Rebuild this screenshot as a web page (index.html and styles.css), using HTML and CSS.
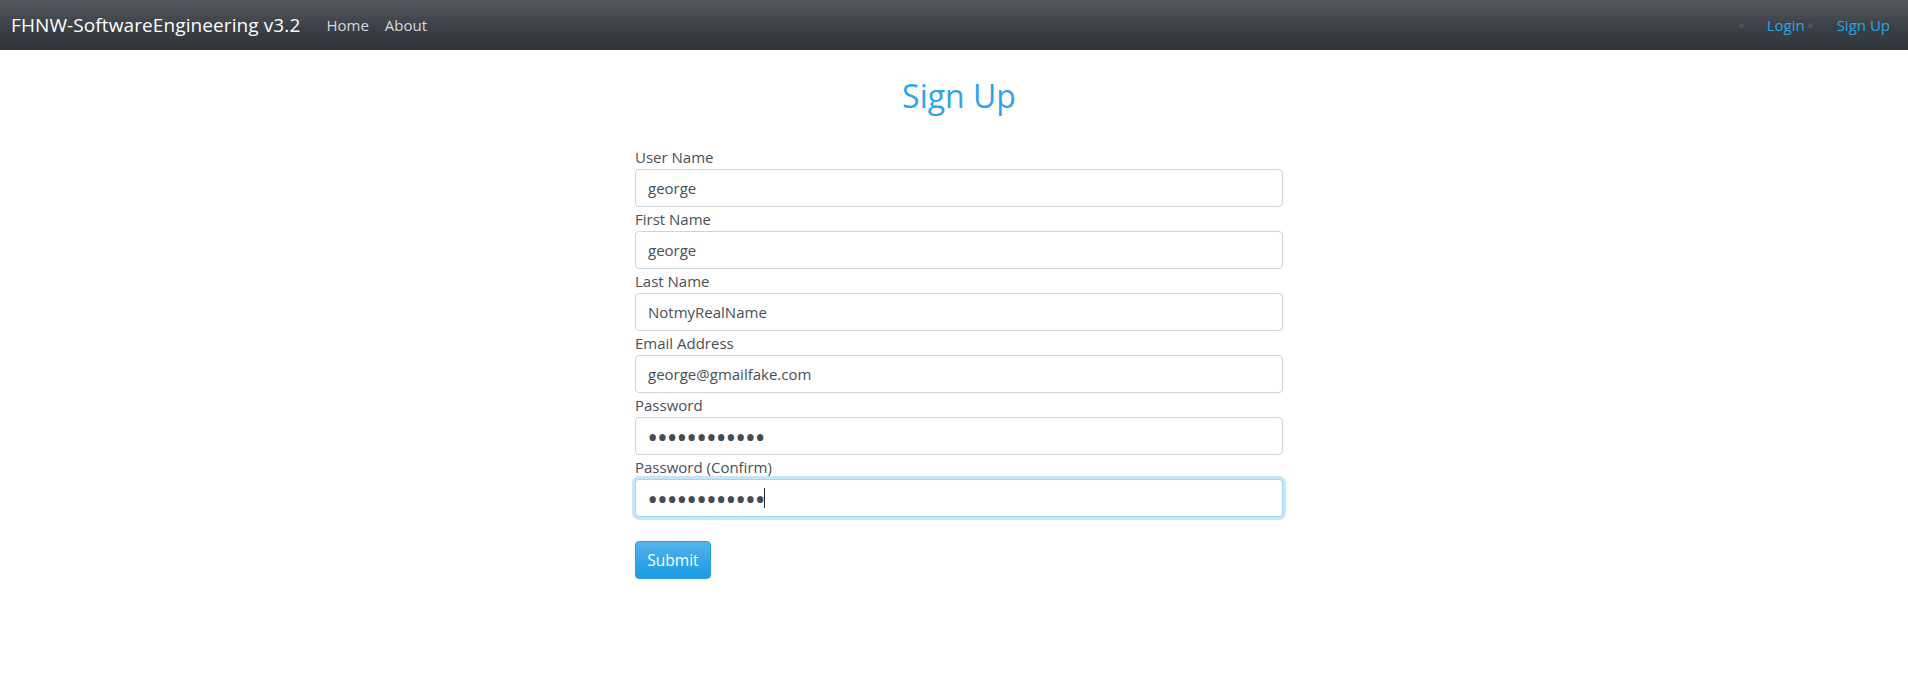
FILE: index.html
```html
<!DOCTYPE html>
<html lang="en">
<head>
<meta charset="utf-8">
<title>Sign Up</title>
<link rel="stylesheet" href="styles.css">
</head>
<body>
<nav class="navbar">
  <div class="nav-left">
    <a class="brand" href="#">FHNW-SoftwareEngineering v3.2</a>
    <a class="nav-link" href="#">Home</a>
    <a class="nav-link" href="#">About</a>
  </div>
  <div class="nav-right">
    <span class="dot"></span>
    <a class="nav-link accent login" href="#">Login</a>
    <span class="dot dot2"></span>
    <a class="nav-link accent signup" href="#">Sign Up</a>
  </div>
</nav>
<main class="page">
  <div class="column">
    <h1 class="title">Sign Up</h1>
    <form class="form">
      <label class="label" for="u">User Name</label>
      <input class="field" id="u" type="text" value="george">
      <label class="label" for="f">First Name</label>
      <input class="field" id="f" type="text" value="george">
      <label class="label" for="l">Last Name</label>
      <input class="field" id="l" type="text" value="NotmyRealName">
      <label class="label" for="e">Email Address</label>
      <input class="field" id="e" type="text" value="george@gmailfake.com">
      <label class="label" for="p">Password</label>
      <input class="field pw" id="p" type="password" value="abcdefghijkl">
      <label class="label" for="pc">Password (Confirm)</label>
      <div class="focus-wrap">
        <input class="field pw focused" id="pc" type="password" value="abcdefghijkl">
        <span class="caret"></span>
      </div>
      <div class="actions">
        <button class="btn" type="button">Submit</button>
      </div>
    </form>
  </div>
</main>
</body>
</html>
```
FILE: styles.css
```css
* { box-sizing: border-box; }
html, body { margin: 0; padding: 0; background: #fff; }
body {
  font-family: "Open Sans", "Noto Sans", sans-serif;
  font-size: 15px;
  color: #495057;
}
a { text-decoration: none; }

.navbar {
  height: 50px;
  display: flex;
  align-items: center;
  justify-content: space-between;
  padding: 0 18px 0 11px;
  background: linear-gradient(#54595f, #3a4046 55%, #30353a);
}
.nav-left { display: flex; align-items: center; }
.brand {
  color: #fff;
  font-size: 19px;
  margin-right: 26px;
  letter-spacing: 0.1px;
}
.nav-link {
  color: #d9dadb;
  font-size: 15px;
  margin-right: 16px;
}
.nav-right { display: flex; align-items: center; }
.dot {
  width: 5px;
  height: 5px;
  border-radius: 50%;
  background: #4f545a;
}
.nav-link.accent { color: #2fa4e7; margin-right: 0; }
.login { margin-left: 23px; }
.dot2 { margin-left: 3px; }
.signup { margin-left: 24px; }

.page {
  display: flex;
  justify-content: center;
  padding-left: 10px;
  padding-top: 26px;
}
.column { width: 648px; }
.title {
  margin: 0 0 29px;
  text-align: center;
  color: #2fa4e7;
  font-weight: 400;
  font-size: 32px;
  line-height: 40px;
}
.form { display: flex; flex-direction: column; }
.label {
  display: block;
  font-size: 15px;
  line-height: 24px;
  color: #495057;
}
.field {
  display: block;
  width: 100%;
  height: 38px;
  padding: 6px 12px;
  border: 1px solid #ced4da;
  border-radius: 4px;
  font-family: inherit;
  font-size: 15px;
  color: #495057;
  background: #fff;
  outline: none;
}
.pw {
  font-size: 30px;
  letter-spacing: -1.5px;
  padding: 0 11px;
  color: #454b52;
}
.focus-wrap { position: relative; }
.focused {
  border-color: #a1d6f4;
  box-shadow: 0 0 0 3px rgba(47, 164, 231, 0.28);
}
.caret {
  position: absolute;
  left: 129px;
  top: 9px;
  width: 1px;
  height: 20px;
  background: #222;
}
.actions { padding-top: 24px; }
.btn {
  height: 38px;
  width: 76px;
  padding: 0;
  font-family: inherit;
  font-size: 15.5px;
  color: #fff;
  border: 1px solid #2b9ddf;
  border-radius: 4px;
  background: linear-gradient(#54b4eb, #2fa4e7 60%, #1d9ce5);
}
```
